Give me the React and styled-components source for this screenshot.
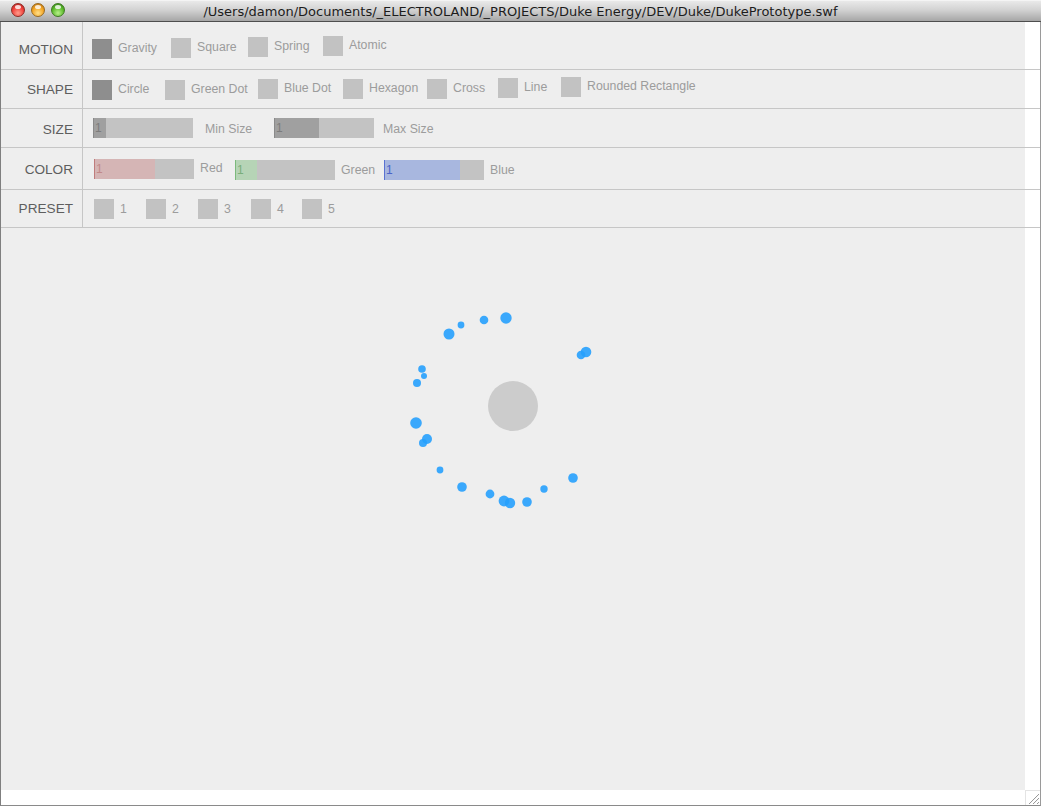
import React from "react";
import styled, { createGlobalStyle } from "styled-components";

const Global = createGlobalStyle`
  html, body { margin: 0; padding: 0; background: #ffffff; }
  body { font-family: "Liberation Sans", Arial, sans-serif; }
  * { box-sizing: border-box; }
`;

const Window = styled.div`
  width: 1041px;
  height: 806px;
  display: flex;
  flex-direction: column;
  overflow: hidden;
`;

const TitleBar = styled.div`
  height: 22px;
  flex: none;
  position: relative;
  display: flex;
  align-items: center;
  justify-content: center;
  background: linear-gradient(#e9e9e9 0%, #d2d2d2 45%, #a6a6a6 100%);
  border-top: 1px solid #f4f4f4;
  border-bottom: 1px solid #4e4e4e;
`;

const Lights = styled.div`
  position: absolute;
  left: 11px;
  top: 2px;
  display: flex;
  gap: 6px;
`;

const Light = styled.span`
  width: 14px;
  height: 14px;
  border-radius: 50%;
  border: 1px solid ${(p) => p.$edge};
  background: radial-gradient(circle at 50% 75%, ${(p) => p.$glow} 0%, ${(p) => p.$base} 55%, ${(p) => p.$dark} 100%);
  position: relative;
  &::after {
    content: "";
    position: absolute;
    left: 3px;
    top: 1px;
    width: 6px;
    height: 4px;
    border-radius: 50%;
    background: rgba(255, 255, 255, 0.8);
  }
`;

const Title = styled.div`
  font-family: "DejaVu Sans", "Liberation Sans", sans-serif;
  font-size: 13px;
  color: #1c1c1c;
  white-space: nowrap;
`;

const Body = styled.div`
  flex: 1;
  display: flex;
  flex-direction: column;
  background: #ffffff;
  border-left: 1px solid #7f7f7f;
  border-right: 1px solid #9a9a9a;
  border-bottom: 1px solid #8a8a8a;
`;

const Row = styled.div`
  display: flex;
  flex: none;
  height: ${(p) => p.$h}px;
  border-bottom: 1px solid #c6c6c6;
`;

const Label = styled.div`
  width: 82px;
  flex: none;
  background: #eeeeee;
  border-right: 1px solid #c6c6c6;
  display: flex;
  align-items: center;
  justify-content: flex-end;
  padding-right: 9px;
  padding-top: ${(p) => p.$pt || 0}px;
  font-size: 13.6px;
  color: #5e5e5e;
`;

const Content = styled.div`
  width: 942px;
  flex: none;
  background: #eeeeee;
  display: flex;
  align-items: center;
  padding-left: ${(p) => p.$pl}px;
  padding-top: ${(p) => p.$pt || 0}px;
`;

const Option = styled.div`
  width: ${(p) => p.$w}px;
  flex: none;
  display: flex;
  align-items: center;
  gap: 6px;
`;

const Box = styled.span`
  width: 20px;
  height: 20px;
  flex: none;
  background: ${(p) => (p.$on ? "#8e8e8e" : "#c2c2c2")};
  position: relative;
  top: ${(p) => p.$dy || 0}px;
`;

const OptText = styled.span`
  font-size: 12.3px;
  color: #9c9c9c;
  white-space: nowrap;
  position: relative;
  top: ${(p) => p.$dy || 0}px;
`;

const SliderItem = styled.div`
  width: ${(p) => p.$w}px;
  flex: none;
  display: flex;
  align-items: center;
  gap: ${(p) => p.$gap}px;
`;

const Track = styled.div`
  width: 100px;
  height: 20px;
  flex: none;
  background: #c3c3c3;
  position: relative;
  top: ${(p) => p.$dy || 0}px;
`;

const Fill = styled.div`
  height: 100%;
  background: ${(p) => p.$fill};
  border-left: 1px solid ${(p) => p.$edge};
  font-size: 12px;
  line-height: 20px;
  color: ${(p) => p.$ink};
  padding-left: 1px;
  overflow: visible;
  white-space: nowrap;
`;

const StageRow = styled.div`
  flex: none;
  display: flex;
  height: 562px;
`;

const Stage = styled.div`
  width: 1024px;
  height: 562px;
  background: #eeeeee;
  flex: none;
`;

const StatusRow = styled.div`
  flex: 1;
  display: flex;
  justify-content: flex-end;
`;

const Grip = styled.div`
  width: 15px;
  border-left: 1px solid #e4e4e4;
  border-top: 1px solid #e4e4e4;
  display: flex;
  align-items: flex-end;
  justify-content: flex-end;
`;

const motion = [
  { t: "Gravity", on: true, w: 79, dy: 1 },
  { t: "Square", w: 77, dy: 0 },
  { t: "Spring", w: 75, dy: -1 },
  { t: "Atomic", w: 80, dy: -2 },
];

const shapes = [
  { t: "Circle", on: true, w: 73, dy: 1 },
  { t: "Green Dot", w: 93, dy: 1 },
  { t: "Blue Dot", w: 85, dy: 0 },
  { t: "Hexagon", w: 84, dy: 0 },
  { t: "Cross", w: 71, dy: 0 },
  { t: "Line", w: 63, dy: -1 },
  { t: "Rounded Rectangle", w: 200, dy: -2 },
];

const presets = [
  { t: "1", w: 52 },
  { t: "2", w: 52 },
  { t: "3", w: 53 },
  { t: "4", w: 51 },
  { t: "5", w: 60 },
];

const dots = [
  [506, 318, 5.7],
  [484, 320, 4.3],
  [461, 325, 3.4],
  [449, 334, 5.5],
  [586, 352, 5.3],
  [581, 355, 4.3],
  [422, 369, 3.8],
  [424, 376, 3],
  [417, 383, 4],
  [416, 423, 5.8],
  [427, 439, 5],
  [423, 443, 4],
  [440, 470, 3.4],
  [462, 487, 4.8],
  [490, 494, 4.4],
  [504, 501, 5.4],
  [510, 503, 5.2],
  [527, 502, 4.8],
  [544, 489, 3.7],
  [573, 478, 4.8],
];

function Slider({ w, gap, fill, pct, edge, ink, text, dy, tdy }) {
  return (
    <SliderItem $w={w} $gap={gap}>
      <Track $dy={dy}>
        <Fill style={{ width: pct }} $fill={fill} $edge={edge} $ink={ink}>
          1
        </Fill>
      </Track>
      <OptText $dy={tdy}>{text}</OptText>
    </SliderItem>
  );
}

export default function App() {
  return (
    <>
      <Global />
      <Window>
        <TitleBar>
          <Lights>
            <Light $base="#f0403a" $glow="#ff9c8c" $dark="#a8201c" $edge="#8e2a24" />
            <Light $base="#f2a424" $glow="#ffe08a" $dark="#b06a10" $edge="#9a6a1e" />
            <Light $base="#5cba2c" $glow="#b8f08a" $dark="#2e7a14" $edge="#3e7a22" />
          </Lights>
          <Title>/Users/damon/Documents/_ELECTROLAND/_PROJECTS/Duke Energy/DEV/Duke/DukePrototype.swf</Title>
        </TitleBar>
        <Body>
          <Row $h={48}>
            <Label $pt={8}>MOTION</Label>
            <Content $pl={9} $pt={5}>
              {motion.map((o) => (
                <Option key={o.t} $w={o.w}>
                  <Box $on={o.on} $dy={o.dy} />
                  <OptText $dy={o.dy - 1}>{o.t}</OptText>
                </Option>
              ))}
            </Content>
          </Row>
          <Row $h={39}>
            <Label $pt={0}>SHAPE</Label>
            <Content $pl={9}>
              {shapes.map((o) => (
                <Option key={o.t} $w={o.w}>
                  <Box $on={o.on} $dy={o.dy} />
                  <OptText $dy={o.dy - 1}>{o.t}</OptText>
                </Option>
              ))}
            </Content>
          </Row>
          <Row $h={39}>
            <Label $pt={2}>SIZE</Label>
            <Content $pl={10}>
              <Slider w={181} gap={12} fill="#a0a0a0" edge="#8a8a8a" ink="#7c7c7c" pct="13px" text="Min Size" dy={0} tdy={1} />
              <Slider w={181} gap={9} fill="#a0a0a0" edge="#8a8a8a" ink="#7c7c7c" pct="45px" text="Max Size" dy={0} tdy={1} />
            </Content>
          </Row>
          <Row $h={42}>
            <Label $pt={2}>COLOR</Label>
            <Content $pl={11}>
              <Slider w={141} gap={6} fill="#d5b5b5" edge="#c07c7c" ink="#c28a8a" pct="61px" text="Red" dy={0} tdy={-1} />
              <Slider w={149} gap={6} fill="#b6d4b6" edge="#7cba7c" ink="#7aae7a" pct="22px" text="Green" dy={1} tdy={1} />
              <Slider w={140} gap={6} fill="#a8b7df" edge="#5a72d2" ink="#4a64c8" pct="76px" text="Blue" dy={1} tdy={1} />
            </Content>
          </Row>
          <Row $h={38}>
            <Label $pt={0}>PRESET</Label>
            <Content $pl={11}>
              {presets.map((o) => (
                <Option key={o.t} $w={o.w}>
                  <Box $dy={0} />
                  <OptText $dy={0}>{o.t}</OptText>
                </Option>
              ))}
            </Content>
          </Row>
          <StageRow>
            <Stage>
              <svg width="1024" height="562" viewBox="1 228 1024 562">
                <circle cx="513" cy="406" r="25" fill="#cccccc" />
                {dots.map(([x, y, r], i) => (
                  <circle key={i} cx={x} cy={y} r={r} fill="#26a0fd" fillOpacity="0.9" />
                ))}
              </svg>
            </Stage>
          </StageRow>
          <StatusRow>
            <Grip>
              <svg width="14" height="14" viewBox="0 0 14 14">
                <path d="M13 3 L3 13 M13 7 L7 13 M13 11 L11 13" stroke="#9a9a9a" strokeWidth="1" />
                <path d="M13 4 L4 13 M13 8 L8 13 M13 12 L12 13" stroke="#f8f8f8" strokeWidth="1" />
              </svg>
            </Grip>
          </StatusRow>
        </Body>
      </Window>
    </>
  );
}
